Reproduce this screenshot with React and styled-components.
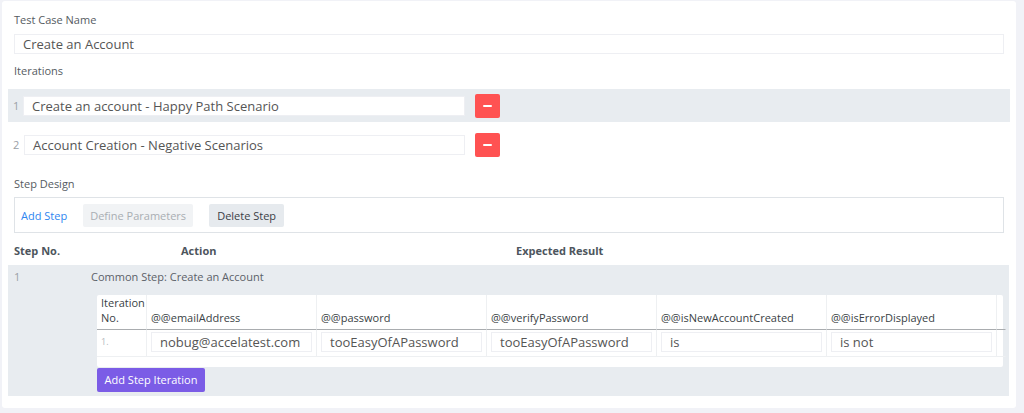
import React from "react";
import styled, { createGlobalStyle } from "styled-components";

const GlobalStyle = createGlobalStyle`
  body {
    margin: 0;
    background: #f1f2f7;
    font-family: 'Open Sans', 'Liberation Sans', sans-serif;
  }
  * { box-sizing: border-box; }
`;

// --- Styled Components ---

const Page = styled.div`
  padding: 1px 8px 0 2px;
  height: 413px;
  overflow: hidden;
`;

const Card = styled.div`
  background: #fff;
  border-radius: 3px;
  height: 407px;
  padding: 12px 12px 0 12px;
`;

const Label = styled.div`
  font-size: 11px;
  line-height: 14px;
  color: #555b62;
  margin-top: ${p => p.$mt || 0}px;
`;

const TextInput = styled.div`
  height: ${p => p.$h || 20}px;
  width: ${p => (p.$w ? p.$w + "px" : "100%")};
  border: 1px solid #eeeff3;
  background: #fff;
  font-size: 13px;
  color: #555;
  display: flex;
  align-items: center;
  padding-left: ${p => p.$pl || 8}px;
  margin-top: ${p => p.$mt || 0}px;
  margin-left: ${p => p.$ml || 0}px;
  white-space: nowrap;
  overflow: hidden;
`;

const IterRow = styled.div`
  display: flex;
  align-items: center;
  height: 33px;
  margin: ${p => p.$mt || 0}px -6px 0 -6px;
  padding-left: 5px;
  background: ${p => (p.$shaded ? "#e8ecf0" : "transparent")};
`;

const IterNum = styled.span`
  width: 10px;
  font-size: 11px;
  color: #9aa0a6;
`;

const RemoveButton = styled.button`
  width: 25px;
  height: 24px;
  border: none;
  border-radius: 2px;
  background: #ff5252;
  margin-left: 10px;
  display: flex;
  align-items: center;
  justify-content: center;
  padding: 0;
  span {
    width: 9px;
    height: 2px;
    background: #fff;
    border-radius: 1px;
  }
`;

const Toolbar = styled.div`
  margin-top: 6px;
  height: 36px;
  border: 1px solid #dfe3e7;
  display: flex;
  align-items: center;
  padding-left: 6px;
  gap: 16px;
`;

const LinkButton = styled.span`
  font-size: 11px;
  color: #2f86f0;
`;

const ToolButton = styled.button`
  height: 23px;
  width: ${p => p.$w}px;
  border: none;
  border-radius: 2px;
  font-family: inherit;
  font-size: 11px;
  background: ${p => (p.$disabled ? "#f1f3f5" : "#e6eaee")};
  color: ${p => (p.$disabled ? "#a9aeb3" : "#3b4046")};
  padding: 0;
`;

const HeaderRow = styled.div`
  display: grid;
  grid-template-columns: 167px 335px 1fr;
  margin-top: 11px;
  height: 14px;
  font-size: 11px;
  line-height: 14px;
  font-weight: 700;
  color: #4d555d;
`;

const StepRow = styled.div`
  margin: 7px -5px 0 -6px;
  height: 131px;
  background: #e8ecf0;
  padding: 5px 0 0 6px;
`;

const StepTop = styled.div`
  display: flex;
  font-size: 11px;
  line-height: 14px;
  color: #5b6168;
  span:first-child {
    width: 77px;
    color: #9aa0a6;
  }
`;

const ParamTable = styled.div`
  margin: 11px 6px 0 83px;
  background: #fff;
  height: 72px;
  border-radius: 2px;
`;

const ParamGrid = styled.div`
  display: grid;
  grid-template-columns: 50px repeat(5, 170px) 1fr;
`;

const HeadCell = styled.div`
  height: 35px;
  border-right: 1px solid ${p => (p.$last ? "transparent" : "#eef0f2")};
  border-bottom: 1px solid #a9acaf;
  display: flex;
  align-items: flex-end;
  padding: 0 0 4px 4px;
  font-size: 11px;
  line-height: 15px;
  color: #3a3f45;
`;

const BodyCell = styled.div`
  height: 27px;
  border-right: 1px solid ${p => (p.$last ? "transparent" : "#eef0f2")};
  border-bottom: 1px solid #eef0f2;
  padding: ${p => (p.$num ? "5px" : "2px")} 4px 0 4px;
  font-size: 9px;
  color: #b5b9bd;
`;

const PurpleButton = styled.button`
  margin: 0 0 0 83px;
  height: 24px;
  width: 108px;
  border: none;
  border-radius: 2px;
  background: #7b5ce6;
  color: #fff;
  font-family: inherit;
  font-size: 11px;
  padding: 0;
`;

// --- Component ---

const params = [
  ["@@emailAddress", "nobug@accelatest.com"],
  ["@@password", "tooEasyOfAPassword"],
  ["@@verifyPassword", "tooEasyOfAPassword"],
  ["@@isNewAccountCreated", "is"],
  ["@@isErrorDisplayed", "is not"],
];

export default function App() {
  return (
    <Page>
      <GlobalStyle />
      <Card>
        <Label>Test Case Name</Label>
        <TextInput $mt={7}>Create an Account</TextInput>

        <Label $mt={10}>Iterations</Label>
        <IterRow $shaded $mt={11}>
          <IterNum>1</IterNum>
          <TextInput $w={442}>Create an account - Happy Path Scenario</TextInput>
          <RemoveButton><span /></RemoveButton>
        </IterRow>
        <IterRow $mt={6}>
          <IterNum>2</IterNum>
          <TextInput $w={441} $ml={1}>Account Creation - Negative Scenarios</TextInput>
          <RemoveButton><span /></RemoveButton>
        </IterRow>

        {/* STEP DESIGN */}
        <Label $mt={16}>Step Design</Label>
        <Toolbar>
          <LinkButton>Add Step</LinkButton>
          <ToolButton $disabled $w={110}>Define Parameters</ToolButton>
          <ToolButton $w={75}>Delete Step</ToolButton>
        </Toolbar>

        <HeaderRow>
          <span>Step No.</span>
          <span>Action</span>
          <span>Expected Result</span>
        </HeaderRow>

        <StepRow>
          <StepTop>
            <span>1</span>
            <span>Common Step: Create an Account</span>
          </StepTop>
          <ParamTable>
            <ParamGrid>
              <HeadCell>Iteration<br />No.</HeadCell>
              {params.map(([name]) => (
                <HeadCell key={name}>{name}</HeadCell>
              ))}
              <HeadCell $last />
              <BodyCell $num>1.</BodyCell>
              {params.map(([name, value]) => (
                <BodyCell key={name}>
                  <TextInput>{value}</TextInput>
                </BodyCell>
              ))}
              <BodyCell $last />
            </ParamGrid>
          </ParamTable>
          <PurpleButton>Add Step Iteration</PurpleButton>
        </StepRow>
      </Card>
    </Page>
  );
}
